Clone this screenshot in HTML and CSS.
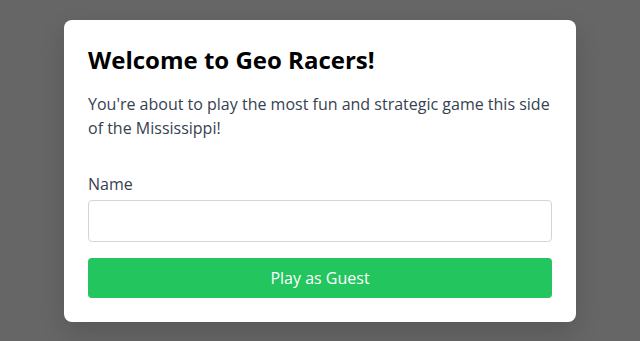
FILE: index.html
```html
<!DOCTYPE html>
<html>
<head>
<meta charset="utf-8">
<link rel="stylesheet" href="styles.css">
</head>
<body>
<div class="overlay">
  <div class="modal">
    <h1 class="title">Welcome to Geo Racers!</h1>
    <p class="intro">You're about to play the most fun and strategic game this side of the Mississippi!</p>
    <form class="form">
      <label class="label" for="name">Name</label>
      <input class="input" id="name" type="text">
      <button class="button" type="button">Play as Guest</button>
    </form>
  </div>
</div>
</body>
</html>
```
FILE: styles.css
```css
* { box-sizing: border-box; }
html, body { margin: 0; height: 100%; }
body {
  font-family: "Open Sans", sans-serif;
  background: #666666;
}
.overlay {
  height: 100%;
  display: flex;
  justify-content: center;
  padding-top: 20px;
}
.modal {
  width: 512px;
  height: 302px;
  background: #fff;
  border-radius: 8px;
  padding: 24px;
  box-shadow: 0 10px 25px rgba(0,0,0,0.15);
}
.title {
  margin: 0;
  font-size: 24px;
  line-height: 32px;
  font-weight: 700;
  color: #000;
}
.intro {
  margin: 16px 0 0;
  font-size: 16px;
  line-height: 24px;
  color: #374151;
}
.form {
  margin-top: 32px;
  display: flex;
  flex-direction: column;
}
.label {
  font-size: 16px;
  line-height: 24px;
  color: #374151;
  margin-bottom: 4px;
}
.input {
  height: 42px;
  border: 1px solid #d1d5db;
  border-radius: 4px;
  font: inherit;
  padding: 0 12px;
}
.button {
  margin-top: 16px;
  height: 40px;
  border: 0;
  border-radius: 4px;
  background: #22c55e;
  color: #fff;
  font: inherit;
  font-size: 16px;
}
```
